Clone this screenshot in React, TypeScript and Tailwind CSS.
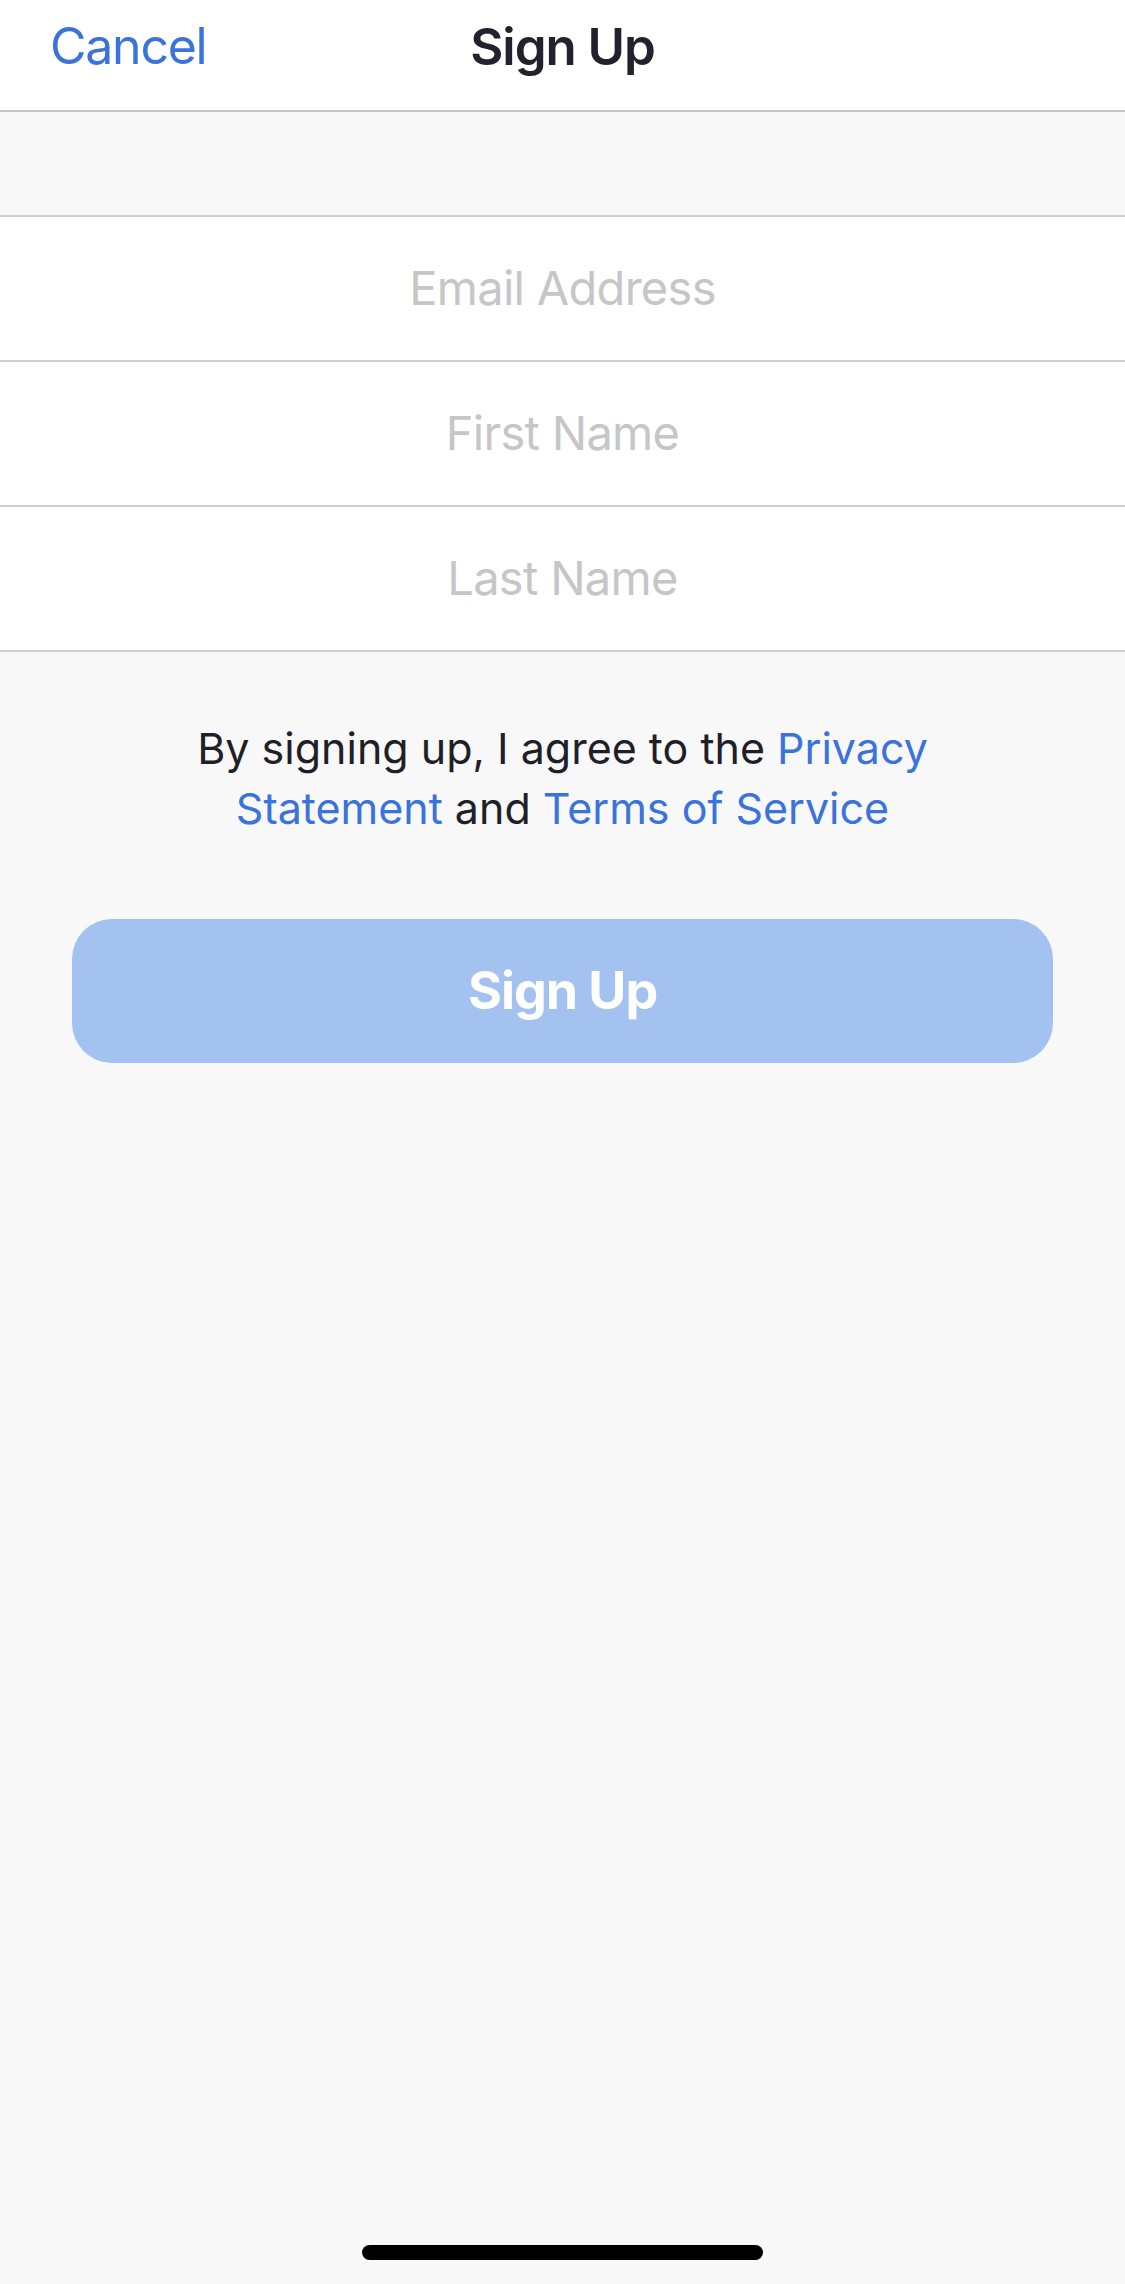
import { useState } from 'react';

const fields = ['Email Address', 'First Name', 'Last Name'];

export default function App() {
  const [values, setValues] = useState<Record<string, string>>({});

  return (
    <div className="flex h-[2284px] w-full flex-col bg-[#f8f8f8] font-['Inter',sans-serif]">
      <div className="grid h-[112px] shrink-0 grid-cols-[1fr_auto_1fr] items-start border-b-2 border-[#c4c4c4] bg-white pt-[21px]">
        <button className="self-start justify-self-start pl-[50px] text-[50px] leading-none tracking-[-0.025em] text-[#3a73db]">
          Cancel
        </button>
        <h1 className="text-[51px] leading-none font-semibold tracking-[-0.02em] text-[#22222e]">
          Sign Up
        </h1>
        <div />
      </div>

      <div className="h-[103px] shrink-0" />

      <div className="border-t-2 border-[#cfcfcf] bg-white">
        {fields.map((f) => (
          <div key={f} className="flex h-[145px] items-center border-b-2 border-[#cfcfcf]">
            <input
              className="w-full bg-transparent text-center text-[47px] tracking-[-0.015em] text-[#22222e] outline-none placeholder:text-[#c6c6c8]"
              placeholder={f}
              value={values[f] ?? ''}
              onChange={(e) => setValues({ ...values, [f]: e.target.value })}
            />
          </div>
        ))}
      </div>

      <p className="mx-auto mt-[66px] w-[820px] text-center text-[43px] leading-[60px] text-[#1f1f29]">
        By signing up, I agree to the <span className="text-[#3a73db]">Privacy Statement</span> and{' '}
        <span className="text-[#3a73db]">Terms of Service</span>
      </p>

      <button className="mx-[72px] mt-[81px] h-[144px] shrink-0 rounded-[40px] bg-[#a4c2f0] text-[52px] font-bold tracking-[-0.02em] text-white">
        Sign Up
      </button>

      <div className="mx-auto mt-auto mb-[24px] h-[15px] w-[401px] shrink-0 rounded-full bg-black" />
    </div>
  );
}
